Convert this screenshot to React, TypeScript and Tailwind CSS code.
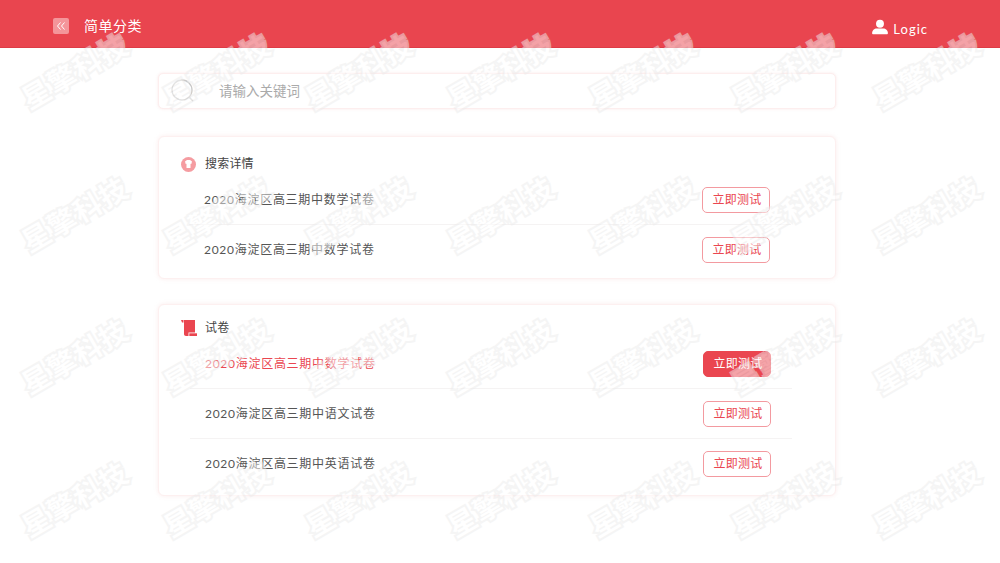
import React from "react";

const FONT = "font-['Lato','Noto_Sans_CJK_SC',sans-serif]";
const marks = Array.from({ length: 28 }, (_, i) => i);

function Row({ label, active, divider }: { label: string; active?: boolean; divider?: boolean }) {
  return (
    <div className={`flex h-[50px] items-center justify-between pl-[15px] pr-[21px] ${divider ? "border-b border-[#f5f3f3]" : ""}`}>
      <span className={`text-[12px] tracking-[0.72px] ${active ? "text-[#ea4650]" : "text-[#555555]"}`}>{label}</span>
      <button
        className={`flex h-[26px] w-[68px] items-center justify-center rounded-[5px] border pl-[2px] text-[12px] tracking-[0.3px] ${
          active ? "border-[#ea4650] bg-[#ea4650] text-white" : "border-[#f39aa0] bg-white text-[#ea4650]"
        }`}
      >
        立即测试
      </button>
    </div>
  );
}

function Card({ children, title, icon, box, rows }: { children: React.ReactNode; title: string; icon: React.ReactNode; box: string; rows: string }) {
  return (
    <section className={`${box} rounded-[6px] border border-[#fdf0f0] bg-white shadow-[0_0_4px_rgba(240,180,180,0.25)]`}>
      <div className="flex h-[16px] items-center pl-[22px]">
        <span className="flex w-[24px] items-center">{icon}</span>
        <span className="text-[12px] tracking-[0.2px] text-[#444444]">{title}</span>
      </div>
      <div className={`${rows} mt-[3px]`}>{children}</div>
    </section>
  );
}

export default function App() {
  return (
    <div className={`relative h-[563px] w-[1000px] overflow-hidden bg-white ${FONT}`}>
      <header className="flex h-12 items-center justify-between border-b border-[#dd3c46] bg-[#e9454f] pl-[53px] pr-[72px] pt-1 text-white">
        <div className="flex items-center">
          <span className="flex h-4 w-4 items-center justify-center rounded-[2px] bg-[#f4959a]">
            <svg width="10" height="10" viewBox="0 0 10 10" fill="none" stroke="white" strokeWidth="1">
              <path d="M4.500 1.500 1.500 5l3 3.500M8.500 1.500 5.500 5l3 3.500" />
            </svg>
          </span>
          <span className="ml-[15px] text-[14px] tracking-[0.5px]">简单分类</span>
        </div>
        <div className="flex items-center">
          <svg width="16" height="16" viewBox="0 0 17 16" fill="white" className="mt-[2px]">
            <circle cx="8.500" cy="4.500" r="4.200" />
            <path d="M1 15.600c-.6 0-.9-.4-.9-1 0-3 2.400-5 5-5h6.800c2.600 0 5 2 5 5 0 .6-.3 1-.9 1z" />
          </svg>
          <span className="ml-[5px] mt-2 text-[13px] tracking-[1px]">Logic</span>
        </div>
      </header>

      <main className="ml-[158px] mt-[25px] w-[678px]">
        <div className="flex h-[36px] items-center rounded-[5px] border border-[#fdeeee] bg-white pl-[12px] shadow-[0_0_3px_rgba(240,180,180,0.3)]">
          <svg width="24" height="24" viewBox="0 0 24 24" fill="none" stroke="#c8c8c8">
            <circle cx="11" cy="11" r="10" strokeWidth="1.300" />
            <path d="m18.500 18.500 3.500 3.500" strokeWidth="1.500" />
          </svg>
          <span className="ml-[24px] text-[13.500px] text-[#aaaaaa]">请输入关键词</span>
        </div>

        <div className="mt-[27px] flex flex-col gap-[25px]">
          <Card
            title="搜索详情"
            box="h-[143px] pt-[19px]"
            rows="ml-[30px] mr-[44px]"
            icon={
              <svg width="15" height="15" viewBox="0 0 15 15">
                <circle cx="7.500" cy="7.500" r="7.500" fill="#f59ca1" />
                <path d="M4 4.500 6 3h3l2 1.500-.7 2.500-.8-.3V11h-4V6.700l-.8.3z" fill="white" />
              </svg>
            }
          >
            <Row label="2020海淀区高三期中数学试卷" divider />
            <Row label="2020海淀区高三期中数学试卷" />
          </Card>
          <Card
            title="试卷"
            box="h-[192px] pt-[15px]"
            rows="ml-[31px] mr-[43px]"
            icon={
              <svg width="16" height="16" viewBox="0 0 16 16" fill="#ea4650">
                <path d="M0 0h2.500v2.500H1zM3 0h11v12.500H7.500V16H5c-1.200 0-2-.7-2-2z" />
                <path d="M8.300 13.300H16V16H8.300z" />
              </svg>
            }
          >
            <Row label="2020海淀区高三期中数学试卷" active divider />
            <Row label="2020海淀区高三期中语文试卷" divider />
            <Row label="2020海淀区高三期中英语试卷" />
          </Card>
        </div>
      </main>

      <div aria-hidden className="pointer-events-none absolute inset-0 grid grid-cols-[repeat(7,142px)] grid-rows-[repeat(4,142.5px)] pl-[4px] opacity-50">
        {marks.map((i) => (
          <div key={i} className="flex items-center justify-center">
            <span className="-rotate-30 whitespace-nowrap text-[28px] font-bold tracking-[1.500px] text-white [-webkit-text-stroke:4px_#ececec] [paint-order:stroke_fill]">
              星擎科技
            </span>
          </div>
        ))}
      </div>
    </div>
  );
}
